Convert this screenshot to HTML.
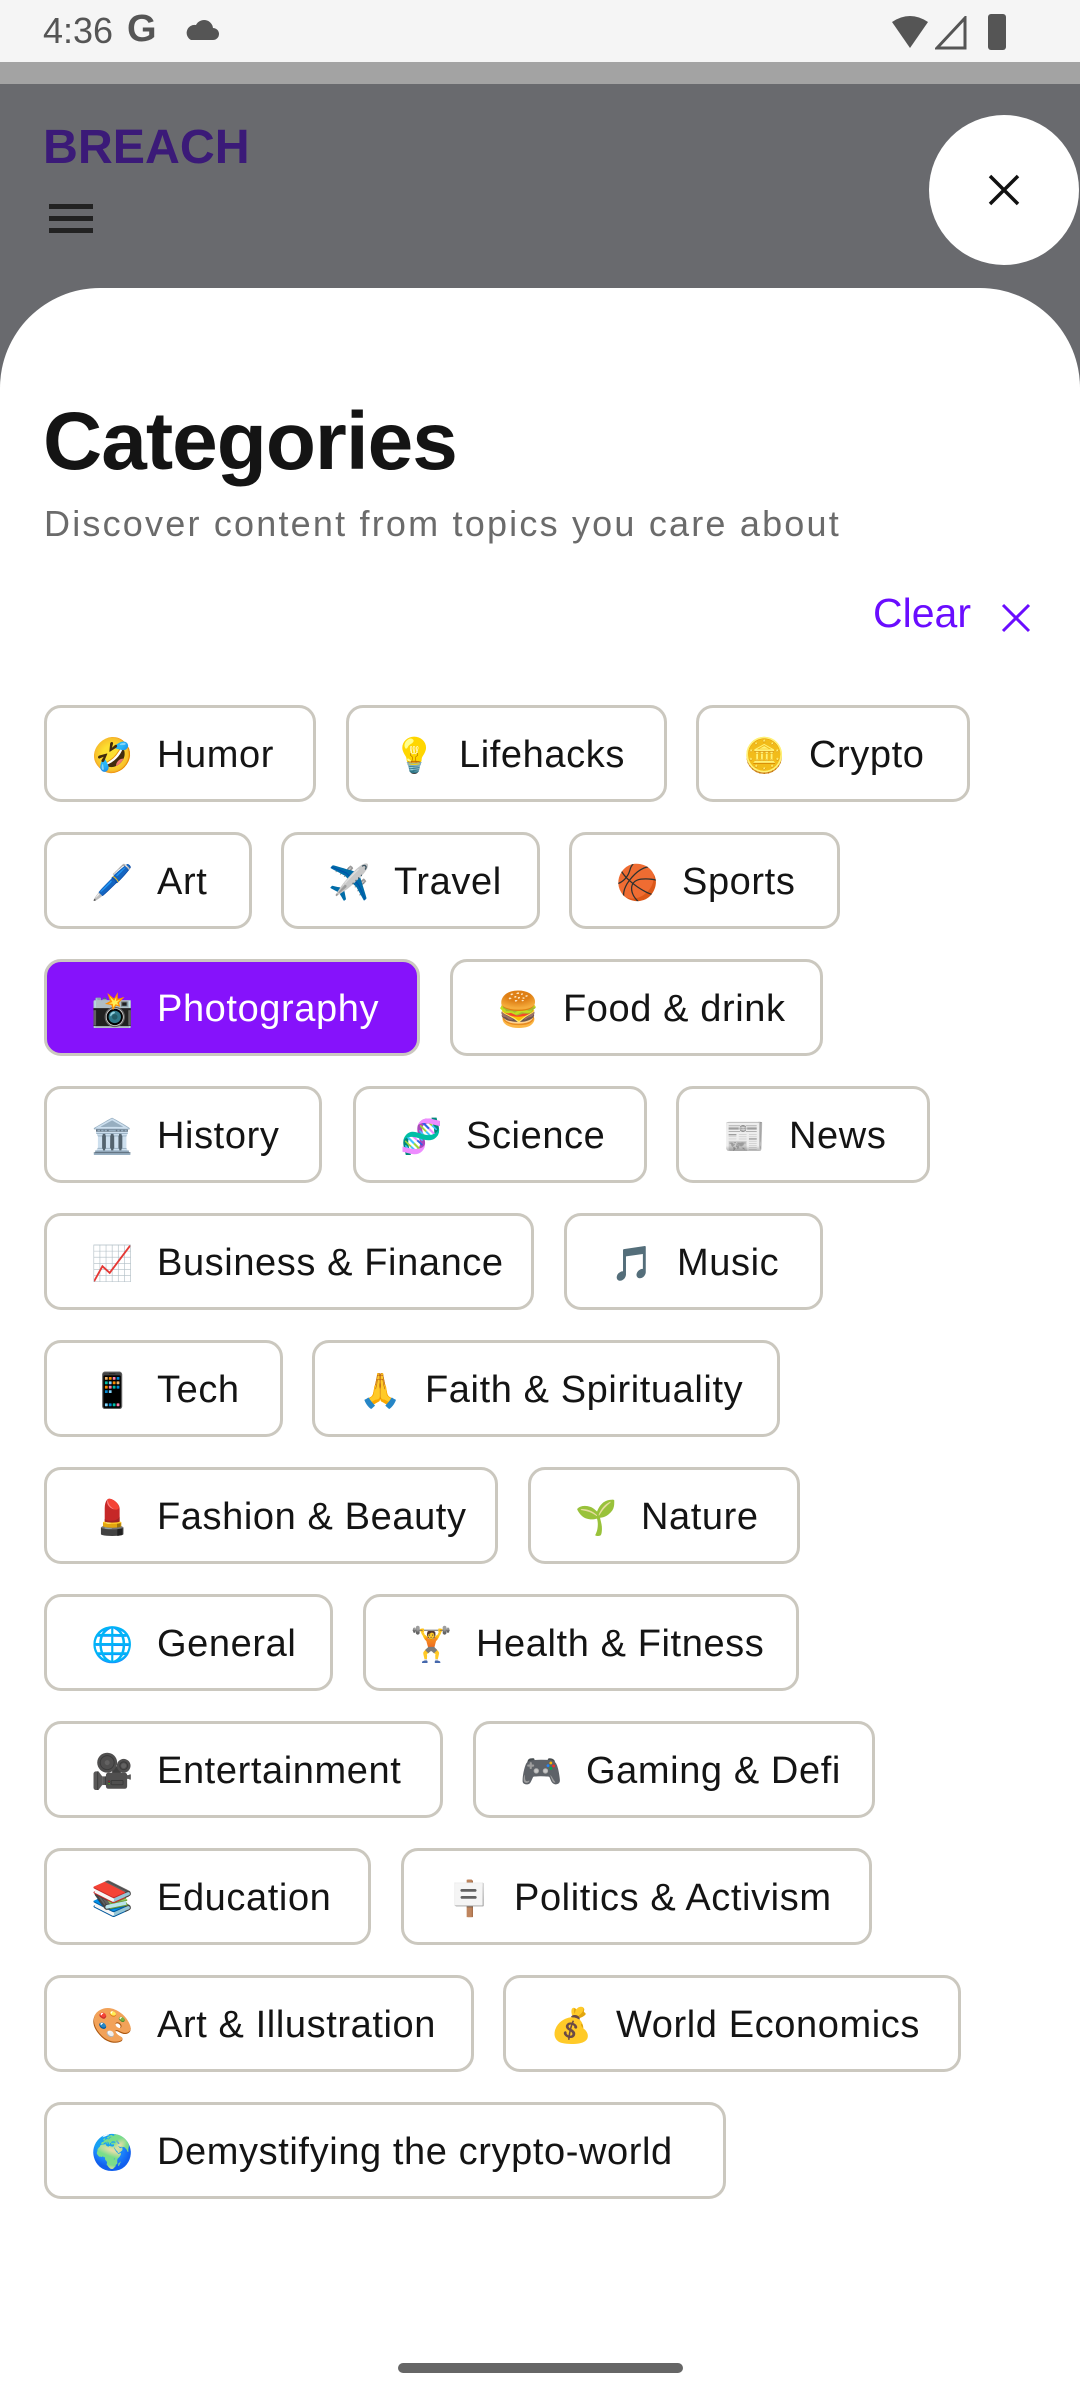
<!DOCTYPE html>
<html><head><meta charset="utf-8">
<style>
*{margin:0;padding:0;box-sizing:border-box}
body{width:1080px;height:2400px;position:relative;overflow:hidden;background:#fff;font-family:"Liberation Sans","Noto Sans CJK JP",sans-serif}
.sb{position:absolute;left:0;top:0;width:1080px;height:62px;background:#f5f5f5;color:#555;font-size:36px}
.stripe{position:absolute;left:0;top:62px;width:1080px;height:22px;background:#a3a3a3}
.ov{position:absolute;left:0;top:84px;width:1080px;height:400px;background:#696a6e}
.logo{position:absolute;left:43px;top:118px;font-size:46px;font-weight:bold;color:#3b1a78;transform:scale(1.05,1.05);transform-origin:left top}
.ham{position:absolute;left:49px;width:44px;height:5px;background:#222}
.close{position:absolute;left:929px;top:115px;width:150px;height:150px;border-radius:50%;background:#fff}
.sheet{position:absolute;left:0;top:288px;width:1080px;height:2112px;background:#fff;border-radius:100px 100px 0 0}
h1{position:absolute;left:43px;top:395px;font-size:82px;font-weight:bold;color:#141414;letter-spacing:-1px}
.sub{position:absolute;left:44px;top:503px;font-size:36px;color:#6b6b6b;letter-spacing:2.2px}
.clear{position:absolute;left:873px;top:590px;font-size:41px;color:#6a0dff}
.chip{position:absolute;height:97px;border:3px solid #cbc8bf;border-radius:17px;background:#fff;font-size:38px;letter-spacing:0.6px;color:#141414;display:flex;align-items:center;padding-left:44px;padding-top:4px;white-space:nowrap}
.chip .e{width:40px;font-size:34px;margin-right:26px;text-align:center;letter-spacing:0}
.chip.sel{background:#8612fb;color:#fff;border-color:#cbc8bf}
.home{position:absolute;left:398px;top:2363px;width:285px;height:10px;border-radius:5px;background:#666}
</style></head><body>
<div class="sb">
<span style="position:absolute;left:43px;top:10px">4:36</span>
<span style="position:absolute;left:127px;top:8px;font-weight:bold;font-size:38px">G</span>
<svg style="position:absolute;left:183px;top:18px" width="36" height="24" viewBox="0 0 36 24"><path d="M8 22h22a6 6 0 0 0 0-12 9 9 0 0 0-17-3A8 8 0 0 0 8 22z" fill="#555"/></svg>
<svg style="position:absolute;left:890px;top:16px" width="40" height="32" viewBox="0 0 40 32"><path d="M2 6Q20-6 38 6L20 32Z" fill="#555"/></svg>
<svg style="position:absolute;left:935px;top:16px" width="32" height="34" viewBox="0 0 32 34"><path d="M30 2V32H2Z" fill="none" stroke="#555" stroke-width="3"/></svg>
<div style="position:absolute;left:988px;top:14px;width:18px;height:36px;background:#555;border-radius:3px"></div>
</div>
<div class="stripe"></div>
<div class="ov"></div>
<div class="logo">BREACH</div>
<div class="ham" style="top:204px"></div><div class="ham" style="top:216px"></div><div class="ham" style="top:228px"></div>
<div class="close"><svg style="position:absolute;left:57px;top:57px" width="36" height="36" viewBox="0 0 36 36"><path d="M4 4L32 32M32 4L4 32" stroke="#111" stroke-width="3.5"/></svg></div>
<div class="sheet"></div>
<h1>Categories</h1>
<div class="sub">Discover content from topics you care about</div>
<div class="clear">Clear</div>
<svg style="position:absolute;left:1000px;top:602px" width="32" height="32" viewBox="0 0 32 32"><path d="M3 3L29 29M29 3L3 29" stroke="#6a0dff" stroke-width="3"/></svg>

<div class="chip" style="left:44px;top:705px;width:272px"><span class="e">🤣</span>Humor</div>
<div class="chip" style="left:346px;top:705px;width:321px"><span class="e">💡</span>Lifehacks</div>
<div class="chip" style="left:696px;top:705px;width:274px"><span class="e">🪙</span>Crypto</div>

<div class="chip" style="left:44px;top:832px;width:208px"><span class="e">🖊️</span>Art</div>
<div class="chip" style="left:281px;top:832px;width:259px"><span class="e">✈️</span>Travel</div>
<div class="chip" style="left:569px;top:832px;width:271px"><span class="e">🏀</span>Sports</div>

<div class="chip sel" style="left:44px;top:959px;width:376px"><span class="e">📸</span>Photography</div>
<div class="chip" style="left:450px;top:959px;width:373px"><span class="e">🍔</span>Food &amp; drink</div>

<div class="chip" style="left:44px;top:1086px;width:278px"><span class="e">🏛️</span>History</div>
<div class="chip" style="left:353px;top:1086px;width:294px"><span class="e">🧬</span>Science</div>
<div class="chip" style="left:676px;top:1086px;width:254px"><span class="e">📰</span>News</div>

<div class="chip" style="left:44px;top:1213px;width:490px"><span class="e">📈</span>Business &amp; Finance</div>
<div class="chip" style="left:564px;top:1213px;width:259px"><span class="e">🎵</span>Music</div>

<div class="chip" style="left:44px;top:1340px;width:239px"><span class="e">📱</span>Tech</div>
<div class="chip" style="left:312px;top:1340px;width:468px"><span class="e">🙏</span>Faith &amp; Spirituality</div>

<div class="chip" style="left:44px;top:1467px;width:454px"><span class="e">💄</span>Fashion &amp; Beauty</div>
<div class="chip" style="left:528px;top:1467px;width:272px"><span class="e">🌱</span>Nature</div>

<div class="chip" style="left:44px;top:1594px;width:289px"><span class="e">🌐</span>General</div>
<div class="chip" style="left:363px;top:1594px;width:436px"><span class="e">🏋️</span>Health &amp; Fitness</div>

<div class="chip" style="left:44px;top:1721px;width:399px"><span class="e">🎥</span>Entertainment</div>
<div class="chip" style="left:473px;top:1721px;width:402px"><span class="e">🎮</span>Gaming &amp; Defi</div>

<div class="chip" style="left:44px;top:1848px;width:327px"><span class="e">📚</span>Education</div>
<div class="chip" style="left:401px;top:1848px;width:471px"><span class="e">🪧</span>Politics &amp; Activism</div>

<div class="chip" style="left:44px;top:1975px;width:430px"><span class="e">🎨</span>Art &amp; Illustration</div>
<div class="chip" style="left:503px;top:1975px;width:458px"><span class="e">💰</span>World Economics</div>

<div class="chip" style="left:44px;top:2102px;width:682px"><span class="e">🌍</span>Demystifying the crypto-world</div>

<div class="home"></div>
</body></html>
